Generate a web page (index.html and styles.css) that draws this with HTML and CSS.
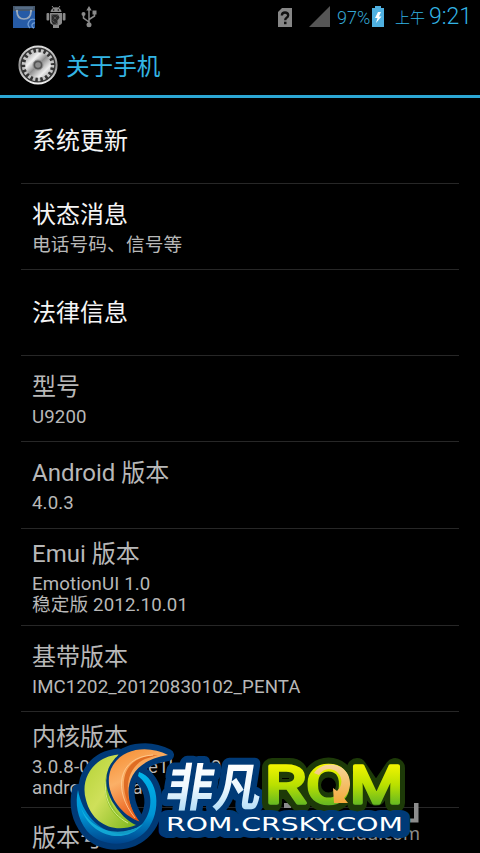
FILE: index.html
```
<!DOCTYPE html>
<html lang="zh-CN">
<head>
    <meta charset="UTF-8">
    <meta name="viewport" content="width=device-width, initial-scale=1.0">
    <title>关于手机</title>
    <link rel="stylesheet" href="styles.css">
</head>
<body>
    <div class="status-bar">
        <div class="status-left">
            <svg class="icon-store" width="24" height="24" viewBox="0 0 24 24">
                <rect x="1" y="1" width="22" height="22" fill="#265ba6"/>
                <path d="M1 1h22v5H1z" fill="#46586d"/>
                <path d="M3 3h18" stroke="#66809e" stroke-width="1"/>
                <path d="M5 6q0 8 7 8t7-8" fill="none" stroke="#9aa9bb" stroke-width="1.7"/>
                <circle cx="5" cy="6" r="1.2" fill="#9aa9bb"/>
                <circle cx="19" cy="6" r="1.2" fill="#9aa9bb"/>
                <path d="M23 14.5a5 5 0 0 0-5 8.500M23 18a2.500 2.500 0 0 0-1 5" fill="none" stroke="#6f9bd2" stroke-width="1.3"/>
            </svg>
            <svg class="icon-android" width="20" height="24" viewBox="0 0 20 24">
                <path d="M6 1l2 2.500M14 1l-2 2.500" stroke="#8a8a8a" stroke-width="1"/>
                <path d="M4.500 7a5.500 4.700 0 0 1 11 0z" fill="#8a8a8a"/>
                <circle cx="7.700" cy="5" r=".7" fill="#000"/>
                <circle cx="12.300" cy="5" r=".7" fill="#000"/>
                <rect x="0.500" y="8" width="2.800" height="7.500" rx="1" fill="#8a8a8a"/>
                <rect x="16.700" y="8" width="2.800" height="7.500" rx="1" fill="#8a8a8a"/>
                <path d="M4 8h12v10q0 1-3 2.500V23H7v-3q-3-1-3-3z" fill="#8a8a8a"/>
                <path d="M5.500 9.500h6.500l1.500 3-2 3v4H7l-1.500-3z" fill="#292929"/>
                <path d="M6.500 10.500l5 5M11.500 10.500l-5 5M7 16l4 3" stroke="#777" stroke-width=".8" stroke-dasharray="1 1"/>
            </svg>
            <svg class="icon-usb" width="16" height="24" viewBox="0 0 16 24">
                <path d="M8 4v16M8 17l-5.500-4V9M8 14.500l5.500-3.500V7.500" fill="none" stroke="#8a8a8a" stroke-width="1.500"/>
                <path d="M8 1l2.700 4.500H5.300z" fill="#8a8a8a"/>
                <circle cx="2.500" cy="9" r="2" fill="#8a8a8a"/>
                <rect x="11.500" y="5.500" width="4" height="4" fill="#8a8a8a"/>
                <circle cx="8" cy="19.800" r="2.500" fill="#8a8a8a"/>
            </svg>
        </div>
        <div class="status-right">
            <svg class="icon-sim" width="14" height="19" viewBox="0 0 14 19">
                <path d="M4 0h10v19H0V4z" fill="#868686"/>
                <path d="M3.800 7.500q.2-3 3.200-3t3.200 2.700q0 1.500-1.600 2.500-1.400.9-1.400 2.600" fill="none" stroke="#111" stroke-width="2.300"/>
                <rect x="6" y="13.700" width="2.500" height="2.500" fill="#111"/>
            </svg>
            <svg class="icon-signal" width="21" height="21" viewBox="0 0 21 21">
                <path d="M21 0v21H0z" fill="#555"/>
            </svg>
            <span class="battery-text">97%</span>
            <svg class="icon-battery" width="12" height="21" viewBox="0 0 12 21">
                <path d="M3 0h6v2h3v19H0V2h3z" fill="#4fb0e0"/>
                <path d="M6 6L3 12h2.500L4 17l5.500-6.500H7L9 6z" fill="#fff"/>
            </svg>
            <span class="ampm">上午</span>
            <span class="clock">9:21</span>
        </div>
    </div>

    <div class="header">
        <svg class="icon-gear" width="40" height="40" viewBox="-20 -20 40 40">
            <defs>
                <linearGradient id="rim" x1="0" y1="0" x2="0" y2="1">
                    <stop offset="0" stop-color="#dcdcdc"/>
                    <stop offset=".5" stop-color="#929292"/>
                    <stop offset="1" stop-color="#f0f0f0"/>
                </linearGradient>
                <linearGradient id="steel" x1="0" y1="0" x2="1" y2="1">
                    <stop offset="0" stop-color="#8b8b8b"/>
                    <stop offset=".3" stop-color="#f2f2f2"/>
                    <stop offset=".5" stop-color="#8f8f8f"/>
                    <stop offset=".75" stop-color="#eee"/>
                    <stop offset="1" stop-color="#999"/>
                </linearGradient>
            </defs>
            <circle r="18.600" fill="#343434" stroke="url(#rim)" stroke-width="2"/>
            <circle r="14" fill="none" stroke="#c4c4c4" stroke-width="4.400" stroke-dasharray="2.500 2.387"/>
            <circle r="12.800" fill="url(#steel)"/>
            <circle r="5" fill="#555" stroke="#999" stroke-width="1"/>
            <circle r="2.800" fill="#8d8d8d"/>
        </svg>
        <h1>关于手机</h1>
    </div>

    <ul class="list">
        <li class="row active"><h2>系统更新</h2></li>
        <li class="row active double"><h2>状态消息</h2><p>电话号码、信号等</p></li>
        <li class="row active"><h2>法律信息</h2></li>
        <li class="row double"><h2>型号</h2><p>U9200</p></li>
        <li class="row android"><h2>Android 版本</h2><p>4.0.3</p></li>
        <li class="row tall"><h2>Emui 版本</h2><p>EmotionUI 1.0<br>稳定版 2012.10.01</p></li>
        <li class="row double"><h2>基带版本</h2><p>IMC1202_20120830102_PENTA</p></li>
        <li class="row kernel"><h2>内核版本</h2><p>3.0.8-00658-ge1b4a80<br>android@ecan</p></li>
        <li class="row last"><h2>版本号</h2></li>
    </ul>

    <svg class="watermark" width="360" height="115" viewBox="65 738 360 115">
        <defs>
            <linearGradient id="green" gradientUnits="userSpaceOnUse" x1="0" y1="764" x2="0" y2="806">
                <stop offset="0" stop-color="#f4f500"/>
                <stop offset=".5" stop-color="#b9e000"/>
                <stop offset="1" stop-color="#5fb524"/>
            </linearGradient>
            <linearGradient id="ice" gradientUnits="userSpaceOnUse" x1="0" y1="-42" x2="0" y2="4">
                <stop offset="0" stop-color="#fff"/>
                <stop offset=".5" stop-color="#eef8fe"/>
                <stop offset="1" stop-color="#b5dff8"/>
            </linearGradient>
            <linearGradient id="lime" x1="0" y1="0" x2="1" y2="1">
                <stop offset="0" stop-color="#b4d235"/>
                <stop offset=".45" stop-color="#cfe05a"/>
                <stop offset="1" stop-color="#79b51c"/>
            </linearGradient>
            <linearGradient id="orange" x1="0" y1="0" x2=".4" y2="1">
                <stop offset="0" stop-color="#f58a2c"/>
                <stop offset=".45" stop-color="#fbb067"/>
                <stop offset="1" stop-color="#e85412"/>
            </linearGradient>
            <linearGradient id="sea" x1="0" y1="0" x2="0" y2="1">
                <stop offset="0" stop-color="#00b4ea"/>
                <stop offset=".6" stop-color="#0094d4"/>
                <stop offset="1" stop-color="#00448c"/>
            </linearGradient>
            <linearGradient id="gold" x1="0" y1="0" x2="0" y2="1">
                <stop offset="0" stop-color="#f7d69a"/>
                <stop offset="1" stop-color="#f2a93a"/>
            </linearGradient>
            <path id="ring" d="M139 772C159 778 162 812 147 830C131 848 102 848 87 831C77 818 75 803 78 790C82 813 98 831 119 834C147 836 163 796 138 776Z"/>
            <path id="leaf" d="M118.500 754.500C92 757 80 780 86 800C92 824 114 834 136 825C116 817 98 783 118.500 754.500Z"/>
            <path id="flame" d="M168 755C149 745 121 747 111 769C103 789 118 814 139.500 821.500C121 798 123 762 168 755Z"/>
        </defs>

        <g fill="#8c8c8c">
            <path d="M284 803h7v5h-7zM414 803h4.500v19.500H410v-4h4z"/>
            <text class="site" x="267" y="840" textLength="153" lengthAdjust="spacingAndGlyphs">www.shendu.com</text>
        </g>

        <g class="blue-edge">
            <use href="#ring"/>
            <use href="#leaf"/>
            <use href="#flame"/>
        </g>
        <use href="#ring" fill="url(#sea)"/>
        <path d="M81 808C91 829 117 840 143 824C126 845 91 838 81 808Z" fill="#18c3e5" opacity=".7"/>
        <use class="leaf-edge" href="#leaf"/>
        <use href="#leaf" fill="url(#lime)"/>
        <path d="M117 757C101 779 106 811 131 824C103 818 96 777 117 757Z" fill="#8fc32a"/>
        <path d="M109 772C100 792 109 813 128 823" fill="none" stroke="#e9f3a0" stroke-width=".8"/>
        <use class="leaf-edge" href="#flame"/>
        <use href="#flame" fill="url(#orange)"/>
        <path d="M158 755C119 756 115 789 138 820C122 797 125 768 145 759Z" fill="#d65a12" opacity=".75"/>
        <path d="M153 755C117 757 113 791 135 818" fill="none" stroke="#ffd09a" stroke-width=".8"/>

        <text class="brand-cn edge" transform="translate(164 806) skewX(-9)" textLength="95" lengthAdjust="spacingAndGlyphs">非凡</text>
        <g class="brand-rom edge">
            <circle cx="328.500" cy="785" r="17.500"/>
            <path d="M272 803V768H289Q299 768 299 778T289 789H275M288 789L301 803M357 803V768L376 796L395 768V803"/>
        </g>
        <g class="brand-rom">
            <text x="265" y="803" textLength="41" lengthAdjust="spacingAndGlyphs">R</text>
            <text x="306" y="803" textLength="45" lengthAdjust="spacingAndGlyphs">O</text>
            <text x="350" y="803" textLength="53" lengthAdjust="spacingAndGlyphs">M</text>
        </g>
        <path d="M314 773C324 758 351 763 350 785Q349 793 344 798L348 803L334 803L333 788L337 791C345 784 342 770 329 769Q323 769 319 775Z" fill="url(#gold)"/>

        <text class="brand-url" x="166" y="831" textLength="237" lengthAdjust="spacingAndGlyphs">ROM.CRSKY.COM</text>
        <text class="brand-cn" fill="url(#ice)" transform="translate(164 806) skewX(-9)" textLength="95" lengthAdjust="spacingAndGlyphs">非凡</text>
    </svg>
</body>
</html>
```
FILE: styles.css
```
* {
    box-sizing: border-box;
    margin: 0;
    padding: 0;
}
body {
    position: relative;
    width: 480px;
    height: 853px;
    overflow: hidden;
    background-color: #000;
    color: #b8b8b8;
    font-family: Roboto, "Noto Sans CJK SC", sans-serif;
}
svg {
    display: block;
    flex: none;
}

/* status bar */
.status-bar {
    display: flex;
    justify-content: space-between;
    height: 34px;
    padding: 0 10px 0 12px;
}
.status-left {
    display: flex;
    padding-top: 5px;
}
.icon-android {
    margin-left: 10px;
}
.icon-usb {
    margin-left: 15px;
}
.status-right {
    display: flex;
    color: #33b5e5;
    line-height: 34px;
}
.icon-sim {
    margin-top: 8px;
}
.icon-signal {
    margin: 6px 7px 0 17px;
}
.battery-text {
    width: 35px;
    font-size: 18px;
    font-weight: 300;
    line-height: 36px;
    color: #35a5d2;
}
.icon-battery {
    margin-top: 6px;
}
.ampm {
    margin-left: 11px;
    font-size: 15px;
    font-weight: 300;
    line-height: 37px;
}
.clock {
    width: 41px;
    margin-left: 4px;
    font-size: 23px;
    font-weight: 300;
    line-height: 34px;
}

/* title bar */
.header {
    display: flex;
    align-items: center;
    height: 64px;
    padding: 1px 0 0 18px;
    border-bottom: 3px solid #2ca7d5;
}
.header h1 {
    margin-left: 8px;
    padding-top: 3px;
    font-size: 23.6px;
    font-weight: 400;
    line-height: 28px;
    color: #33b5e5;
}

/* list */
.list {
    margin: 0 21px;
    list-style: none;
}
.row {
    display: flex;
    flex-direction: column;
    justify-content: center;
    gap: 6px;
    height: 86px;
    padding-left: 11px;
    border-bottom: 1px solid #272727;
    white-space: nowrap;
}
.row h2 {
    font-size: 24px;
    font-weight: 400;
    line-height: 28px;
}
.row p {
    font-size: 18.67px;
    line-height: 21px;
    letter-spacing: 0.12px;
}
.active h2 {
    color: #f5f5f5;
}
.double {
    padding-top: 3px;
}
.android {
    height: 87px;
    padding-top: 2px;
}
.tall {
    height: 97px;
    padding-top: 2px;
}
.kernel {
    height: 96px;
    padding-top: 2px;
}
.last {
    height: 45px;
    padding-top: 15px;
    border-bottom: none;
}

/* site watermark over the list */
.watermark {
    position: absolute;
    left: 65px;
    top: 738px;
}
.site {
    font-family: "Noto Sans", sans-serif;
    font-size: 18px;
}
.blue-edge {
    fill: #003a77;
    stroke: #003a77;
    stroke-width: 12px;
    stroke-linejoin: round;
}
.leaf-edge {
    stroke: #003a77;
    stroke-width: 5px;
    stroke-linejoin: round;
}
.brand-cn {
    font-family: "Noto Sans CJK SC", sans-serif;
    font-size: 51px;
    font-weight: 700;
}
.brand-cn.edge {
    fill: #003a77;
    stroke: #003a77;
    stroke-width: 14px;
    stroke-linejoin: round;
}
.brand-rom {
    font-family: Roboto, sans-serif;
    font-size: 52px;
    font-weight: 400;
    fill: url(#green);
    stroke: url(#green);
    stroke-width: 3.5px;
    stroke-linejoin: round;
}
.brand-rom.edge {
    fill: none;
    stroke: #1d3a08;
    stroke-width: 20px;
    stroke-linecap: round;
}
.brand-url {
    font-family: "DejaVu Sans", sans-serif;
    font-size: 20px;
    fill: #fff;
    stroke: #003a77;
    stroke-width: 14px;
    stroke-linejoin: round;
    paint-order: stroke;
}
```
